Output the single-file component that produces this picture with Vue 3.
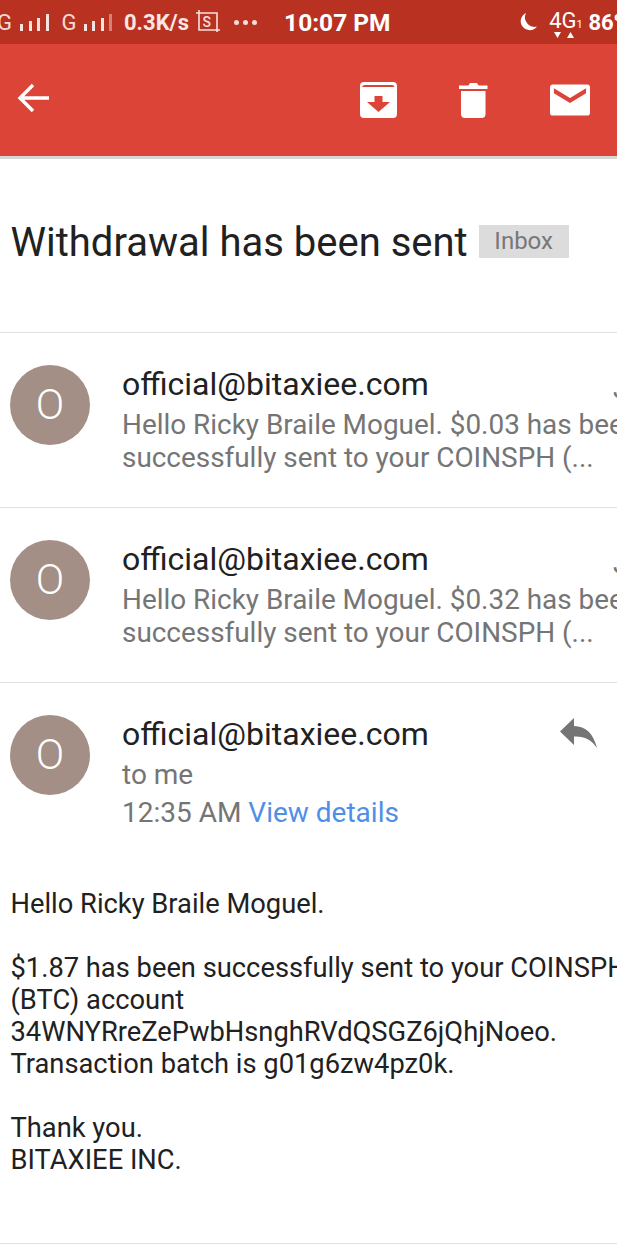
<script setup>
const threads = [
  { id: 1, amount: '$0.03' },
  { id: 2, amount: '$0.32' },
]
</script>

<template>
  <div class="page">
    <div class="status">
      <div class="status-left">
        <span class="net first">G</span>
        <span class="bars"><i class="b1"></i><i class="b2"></i><i class="b3"></i><i class="b4"></i></span>
        <span class="net">G</span>
        <span class="bars"><i class="b1"></i><i class="b2"></i><i class="b3"></i><i class="b4 faint"></i></span>
        <span class="speed">0.3K/s</span>
        <svg class="shot" width="26" height="24" viewBox="0 0 26 24">
          <path d="M1 3H22V22M4 0V20H25" fill="none" stroke="#f6dfda" stroke-width="1.6" />
          <text x="7.5" y="16.5" class="shot-s">S</text>
        </svg>
        <span class="dots"><i></i><i></i><i></i></span>
      </div>
      <span class="clock">10:07 PM</span>
      <div class="status-right">
        <svg class="moon" width="20" height="20" viewBox="0 0 20 20">
          <path d="M8 1A9 9 0 1 0 19 14.5 A9.5 9.5 0 0 1 8 1Z" fill="#fff" />
        </svg>
        <span class="fourg">
          <span class="fourg-text">4G<small>1</small></span>
          <svg width="26" height="7" viewBox="0 0 26 7"><path d="M1 1H8L4.500 7ZM14 7L17.500 1L21 7Z" fill="#fff"/></svg>
        </span>
        <span class="battery">86%</span>
      </div>
    </div>

    <header class="toolbar">
      <svg class="back" width="34" height="34" viewBox="0 0 34 34">
        <path d="M33 17H4M17 4L4 17L17 30" fill="none" stroke="#fff" stroke-width="3.400" />
      </svg>
      <div class="actions">
        <svg width="37" height="37" viewBox="0 0 37 37">
          <path fill-rule="evenodd" fill="#fff" d="M4 0H33Q37 0 37 4V32Q37 36 33 36H4Q0 36 0 32V4Q0 0 4 0ZM5 3Q2.500 3 2 5H34.500Q34 3 32 3ZM14.500 14V20H7L18.500 30L30 20H22.500V14Z" />
        </svg>
        <svg width="29" height="37" viewBox="0 0 29 37">
          <path fill="#fff" d="M0 3.500H9.500L11 1H18L19.500 3.500H28.500V7H0ZM2 9H26.500V32Q26.500 36 22.500 36H6Q2 36 2 32Z" />
        </svg>
        <svg width="40" height="33" viewBox="0 0 41 33">
          <path fill-rule="evenodd" fill="#fff" d="M3 0H38Q41 0 41 3V29Q41 32 38 32H3Q0 32 0 29V3Q0 0 3 0ZM4 4V9L20.500 19L37 9V4L20.500 14Z" />
        </svg>
      </div>
    </header>

    <section class="subject">
      <h1>Withdrawal has been sent</h1>
      <span class="label">Inbox</span>
    </section>

    <article v-for="t in threads" :key="t.id" class="thread">
      <div class="avatar">O</div>
      <div class="thread-body">
        <div class="sender">official@bitaxiee.com</div>
        <div class="snippet nowrap">Hello Ricky Braile Moguel. {{ t.amount }} has been</div>
        <div class="snippet nowrap">successfully sent to your COINSPH (...</div>
      </div>
      <span class="date">J</span>
    </article>

    <article class="message-head">
      <div class="avatar">O</div>
      <div class="thread-body">
        <div class="sender">official@bitaxiee.com</div>
        <div class="to">to me</div>
        <div class="time">12:35 AM <a class="details">View details</a></div>
      </div>
      <svg class="reply" width="37" height="30" viewBox="0 0 37 30">
        <path fill="#757575" d="M14 0V8C26 8.500 33 15 37 30C31 21 24 18 14 18.500V27L0 13.500Z" />
      </svg>
    </article>

    <section class="mail">
      <p>Hello Ricky Braile Moguel.</p>
      <p>$1.87 has been successfully sent to your COINSPH<br />(BTC) account<br />34WNYRreZePwbHsnghRVdQSGZ6jQhjNoeo.<br />Transaction batch is g01g6zw4pz0k.</p>
      <p>Thank you.<br />BITAXIEE INC.</p>
    </section>
  </div>
</template>

<style>
html, body { margin: 0; background: #fff; }
</style>

<style scoped>
.page {
  width: 617px;
  height: 1258px;
  overflow: hidden;
  background: #fff;
  font-family: Roboto, "Liberation Sans", sans-serif;
  color: #212121;
}
.status {
  position: relative;
  height: 44px;
  background: #b93221;
  color: #fff;
  display: flex;
  align-items: center;
  overflow: hidden;
}
.status-left { display: flex; align-items: center; margin-left: -3px; }
.net { font-size: 22px; color: #f4dcd7; margin-right: 7px; }
.net.first { margin-right: 8px; }
.bars { display: flex; align-items: flex-end; gap: 5.500px; height: 18px; margin-right: 13px; }
.bars i { width: 3px; background: #f6e4e0; display: block; }
.b1 { height: 7px; }
.b2 { height: 10px; }
.b3 { height: 13px; }
.b4 { height: 17px; }
.b4.faint { opacity: 0.45; }
.speed { font-size: 22px; font-weight: 700; color: #f8e6e2; margin-left: -1px; }
.shot { margin-left: 6px; margin-top: 0; }
.shot-s { font: 500 14px Roboto, sans-serif; fill: #f6dfda; }
.dots { display: flex; gap: 4px; margin-left: 13px; }
.dots i { width: 5px; height: 5px; border-radius: 50%; background: #f4dcd7; display: block; }
.clock {
  font-size: 24.500px;
  font-weight: 700;
  margin-left: 27px;
  white-space: nowrap;
}
.status-right { display: flex; align-items: center; margin-left: auto; margin-right: -13px; }
.moon { margin-right: 11px; }
.fourg { display: flex; flex-direction: column; align-items: center; line-height: 1; width: 33px; }
.fourg-text { font-size: 22px; white-space: nowrap; margin-top: 3px; }
.fourg-text small { font-size: 11px; }
.fourg svg { display: block; margin-top: -1px; }
.battery { font-size: 22px; font-weight: 700; margin-left: 6px; white-space: nowrap; }

.toolbar {
  height: 112px;
  background: #db4437;
  border-bottom: 3px solid #d6d6d6;
  display: flex;
  align-items: center;
  padding-left: 16px;
}
.back { margin-top: -4px; display: block; }
.actions {
  margin-left: auto;
  margin-right: 27px;
  display: flex;
  align-items: center;
  gap: 62px;
}
.actions svg { display: block; }

.subject {
  height: 173px;
  box-sizing: border-box;
  display: flex;
  align-items: center;
  padding: 0 0 6px 11px;
}
.subject h1 {
  margin: 0 0 0 -0.500px;
  font-size: 40px;
  font-weight: 400;
  white-space: nowrap;
}
.label {
  margin-left: 11px;
  background: #dcdcdc;
  color: #777;
  font-size: 24px;
  width: 90px;
  height: 33px;
  line-height: 33px;
  text-align: center;
  transform: translateY(-1px);
}

.thread, .message-head {
  position: relative;
  border-top: 1px solid #e0e0e0;
  height: 175px;
  box-sizing: border-box;
  display: flex;
  padding: 32px 0 0 10px;
}
.avatar {
  flex: none;
  width: 80px;
  height: 80px;
  border-radius: 50%;
  background: #a48f86;
  color: #fff;
  font-size: 42px;
  font-weight: 300;
  line-height: 80px;
  text-align: center;
}
.thread-body { margin-left: 32px; flex: 1; min-width: 0; }
.sender { font-size: 32px; line-height: 38px; white-space: nowrap; }
.snippet {
  font-size: 27.900px;
  line-height: 33px;
  color: #757575;
}
.sender + .snippet { margin-top: 5px; }
.nowrap { white-space: nowrap; }
.date {
  position: absolute;
  left: 613px;
  top: 40px;
  font-size: 27px;
  color: #757575;
}
.message-head { height: 180px; }
.to { font-size: 28px; line-height: 33px; color: #757575; margin-top: 5px; }
.time { font-size: 28px; line-height: 33px; color: #757575; margin-top: 5px; white-space: nowrap; }
.details { color: #4f8fe6; }
.reply { position: absolute; left: 560px; top: 35px; }

.mail {
  padding: 26px 0 0 10.500px;
  border-bottom: 1px solid #e0e0e0;
  height: 382px;
  box-sizing: border-box;
  font-size: 27.300px;
  line-height: 32px;
  white-space: nowrap;
}
.mail p { margin: 0 0 32px; }
</style>
